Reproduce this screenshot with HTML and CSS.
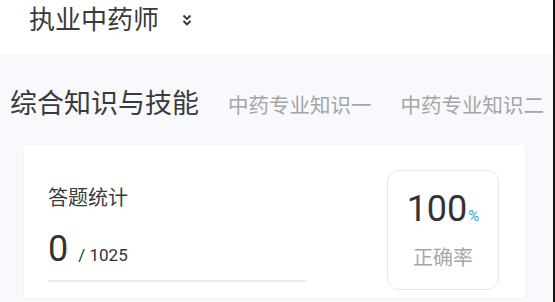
FILE: index.html
```html
<!DOCTYPE html>
<html lang="zh">
<head>
<meta charset="utf-8">
<link rel="stylesheet" href="styles.css">
</head>
<body>
<div class="page">
  <header class="header">
    <span class="title">执业中药师</span>
    <svg class="chev" width="12" height="14" viewBox="0 0 12 14"><path d="M2.5 2.5 L6 6 L9.5 2.5 M2.5 8 L6 11.5 L9.5 8" fill="none" stroke="#333" stroke-width="1.8"/></svg>
  </header>
  <nav class="tabs">
    <span class="tab active">综合知识与技能</span>
    <span class="tab">中药专业知识一</span>
    <span class="tab">中药专业知识二</span>
  </nav>
  <section class="card">
    <div class="stats">
      <div class="stats-title">答题统计</div>
      <div class="count">
        <span class="big">0</span><span class="total">/ 1025</span>
      </div>
      <div class="rule"></div>
    </div>
    <div class="rate">
      <div class="rate-num"><span class="big">100</span><span class="pct">%</span></div>
      <div class="rate-label">正确率</div>
    </div>
  </section>
</div>
<div class="edge"></div>
</body>
</html>
```
FILE: styles.css
```css
html, body { margin: 0; padding: 0; }
body {
  display: flex;
  width: 555px;
  height: 302px;
  overflow: hidden;
  background: #f8f9fc;
  font-family: "Noto Sans CJK SC", "Noto Sans", sans-serif;
  color: #333;
}
.page { width: 553px; height: 302px; overflow: hidden; background: #f8f9fc; }
.edge { width: 2px; height: 302px; background: #111; }
.header {
  height: 54px;
  background: #fff;
  padding-left: 29px;
  display: flex;
  align-items: flex-start;
  box-sizing: border-box;
}
.title { font-size: 26px; line-height: 36px; color: #3a3a3a; }
.chev { margin-left: 22px; margin-top: 13px; }
.tabs {
  display: flex;
  align-items: baseline;
  gap: 29px;
  padding: 30px 0 0 10px;
  height: 36px;
  white-space: nowrap;
}
.tab { font-size: 20.5px; line-height: 36px; color: #a5a5a5; }
.tab.active { font-size: 27px; color: #3a3a3a; }
.card {
  margin: 25px 28px 0 24px;
  height: 153px;
  background: #fff;
  box-sizing: border-box;
  padding: 25px 26px 0 24px;
  display: flex;
  align-items: flex-start;
  box-shadow: 0 0 4px rgba(200, 205, 220, 0.15);
}
.stats { flex: 1; padding-top: 14px; }
.stats-title { font-size: 20px; line-height: 26px; color: #3a3a3a; }
.count { margin-top: 21px; height: 36px; display: flex; align-items: baseline; }
.big { font-family: Roboto, sans-serif; font-size: 36px; line-height: 36px; color: #333; }
.total { font-family: Roboto, sans-serif; font-size: 17px; margin-left: 10px; color: #333; }
.rule { margin-top: 13px; width: 259px; height: 2px; background: #ececec; }
.rate {
  width: 112px; height: 120px;
  box-sizing: border-box;
  border: 1px solid #e8e8e8;
  border-radius: 12px;
  padding-top: 20px;
  text-align: center;
}
.rate-num { height: 36px; display: flex; justify-content: center; align-items: baseline; }
.pct { font-family: Roboto, sans-serif; font-size: 15px; color: #3a9fe0; margin-left: 1px; }
.rate-label { margin-top: 16px; font-size: 20px; line-height: 28px; color: #a8a8a8; }
```
